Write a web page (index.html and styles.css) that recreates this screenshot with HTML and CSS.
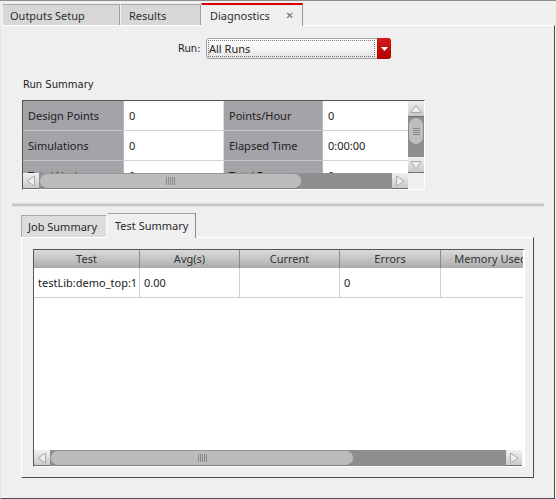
FILE: index.html
```html
<!DOCTYPE html>
<html>
<head>
<meta charset="utf-8">
<link rel="stylesheet" href="styles.css">
</head>
<body>
<div class="tabbar">
  <div class="tab t-outputs">Outputs Setup</div>
  <div class="tab t-results">Results</div>
  <div class="tab active t-diag"><span>Diagnostics</span><span class="close">✕</span></div>
</div>
<div class="main">
  <div class="runrow">
    <span class="runlabel">Run:</span>
    <div class="combo">
      <div class="combo-text">All Runs</div>
      <div class="combo-btn"><svg width="7" height="4" viewBox="0 0 7 4"><polygon points="0,0 7,0 3.5,4" fill="#fff"/></svg></div>
    </div>
  </div>
  <div class="section-label">Run Summary</div>
  <div class="sumbox">
    <div class="sum-top">
      <div class="sum-view">
        <div class="sum-grid">
          <div class="c lab">Design Points</div><div class="c val">0</div><div class="c lab">Points/Hour</div><div class="c val">0</div>
          <div class="c lab">Simulations</div><div class="c val">0</div><div class="c lab">Elapsed Time</div><div class="c val">0:00:00</div>
          <div class="c lab">Total Nodes</div><div class="c val">0</div><div class="c lab">Total Errors</div><div class="c val">0</div>
        </div>
      </div>
      <div class="vscroll">
        <div class="arrow"><svg width="16" height="16" viewBox="0 0 16 16"><polygon points="3,11.5 13,11.5 8,4" fill="#eeeeee" stroke="#a9a9a9"/></svg></div>
        <div class="vhandle"><div class="grip-v"></div></div>
        <div class="vtrack"></div>
        <div class="arrow"><svg width="16" height="16" viewBox="0 0 16 16"><polygon points="3,4.5 13,4.5 8,12" fill="#eeeeee" stroke="#a9a9a9"/></svg></div>
      </div>
    </div>
    <div class="sum-bottom">
      <div class="hscroll hs-small">
        <div class="arrow"><svg width="16" height="16" viewBox="0 0 16 16"><polygon points="11.5,3 11.5,13 4,8" fill="#eeeeee" stroke="#a9a9a9"/></svg></div>
        <div class="hhandle h-small"><div class="grip-h"></div></div>
        <div class="htrack"></div>
        <div class="arrow"><svg width="16" height="16" viewBox="0 0 16 16"><polygon points="4.5,3 4.5,13 12,8" fill="#eeeeee" stroke="#a9a9a9"/></svg></div>
      </div>
      <div class="corner"></div>
    </div>
  </div>
  <div class="splitter"></div>
  <div class="subtabs">
    <div class="subtab">Job Summary</div>
    <div class="subtab active">Test Summary</div>
  </div>
  <div class="subpanel">
    <div class="testtable">
      <div class="tview">
        <div class="thead">
          <div class="h">Test</div><div class="h">Avg(s)</div><div class="h">Current</div><div class="h">Errors</div><div class="h">Memory Used</div>
        </div>
        <div class="trow">
          <div class="d">testLib:demo_top:1</div><div class="d">0.00</div><div class="d"></div><div class="d">0</div><div class="d"></div>
        </div>
      </div>
      <div class="hscroll hs-big">
        <div class="arrow"><svg width="16" height="16" viewBox="0 0 16 16"><polygon points="11.5,3 11.5,13 4,8" fill="#eeeeee" stroke="#a9a9a9"/></svg></div>
        <div class="hhandle h-big"><div class="grip-h"></div></div>
        <div class="htrack"></div>
        <div class="arrow"><svg width="16" height="16" viewBox="0 0 16 16"><polygon points="4.5,3 4.5,13 12,8" fill="#eeeeee" stroke="#a9a9a9"/></svg></div>
      </div>
    </div>
  </div>
</div>
</body>
</html>
```
FILE: styles.css
```css
html, body {
  margin: 0;
  padding: 0;
}
body {
  width: 556px;
  height: 499px;
  overflow: hidden;
  background: #efefef;
  font-family: "Noto Sans", "DejaVu Sans", sans-serif;
  font-size: 11px;
  color: #2a2a2a;
}
.tabbar {
  height: 24px;
  border-top: 1px solid #8e8e8e;
  display: flex;
  align-items: flex-end;
  padding-left: 2px;
  position: relative;
  z-index: 2;
}
.tab {
  box-sizing: border-box;
  height: 21px;
  background: #d7d7d7;
  border-top: 1px solid #a8a8a8;
  border-left: 1px solid #f4f4f4;
  border-right: 1px solid #9c9c9c;
  padding-left: 7px;
  padding-top: 1px;
  display: flex;
  align-items: center;
  color: #2e2e2e;
}
.t-outputs { width: 118px; }
.t-results { width: 81px; padding-left: 8px; }
.t-diag { width: 102px; padding-left: 8px; }
.tab.active {
  height: 23px;
  margin-bottom: -1px;
  background: #efefef;
  border-top: 2px solid #d40000;
  padding-top: 0;
  padding-bottom: 1px;
  justify-content: space-between;
  padding-right: 8px;
}
.close {
  font-size: 10px;
  font-weight: bold;
  color: #666;
}
.main {
  box-sizing: border-box;
  height: 474px;
  width: 555px;
  border-top: 1px solid #ffffff;
  border-left: 1px solid #e4e4e4;
  border-right: 1px solid #4d4d4d;
  border-bottom: 1px solid #4d4d4d;
  position: relative;
  z-index: 1;
}
.runrow {
  margin-top: 12px;
  display: flex;
  align-items: center;
  padding-left: 177px;
}
.runlabel {
  font-family: "DejaVu Sans", sans-serif;
  font-size: 10px;
  color: #222;
  width: 28px;
}
.combo {
  box-sizing: border-box;
  width: 185px;
  height: 21px;
  border: 1px solid #a2a2a2;
  border-radius: 3px;
  background: linear-gradient(#ffffff, #f2f2f2 60%, #e2e2e2);
  display: flex;
  padding: 1px 0 1px 1px;
}
.combo-text {
  flex: 1;
  border: 1px dotted #7a7a7a;
  padding-left: 0;
  line-height: 15px;
  color: #1e1e1e;
}
.combo-btn {
  width: 14px;
  margin-top: -2px;
  margin-bottom: -2px;
  margin-right: -1px;
  background: linear-gradient(#d61a1a, #b30000);
  border-radius: 0 3px 3px 0;
  display: flex;
  align-items: center;
  justify-content: center;
  margin-left: 2px;
}
.section-label {
  margin-top: 19px;
  margin-left: 22px;
  height: 14px;
  line-height: 14px;
  font-family: "DejaVu Sans", sans-serif;
  font-size: 10px;
  color: #222;
}
.sumbox {
  margin-top: 8px;
  margin-left: 21px;
  width: 403px;
  box-sizing: border-box;
  border-top: 1px solid #555;
  border-left: 1px solid #555;
  border-right: 1px solid #fff;
  border-bottom: 1px solid #fff;
}
.sum-top {
  display: flex;
  height: 72px;
}
.sum-view {
  width: 385px;
  overflow: hidden;
  background: #fff;
}
.sum-grid {
  display: grid;
  grid-template-columns: 101px 100px 99px 100px;
  grid-auto-rows: 30px;
}
.c {
  box-sizing: border-box;
  border-bottom: 1px solid #d2d2d2;
  padding-left: 5px;
  display: flex;
  align-items: center;
  white-space: nowrap;
  color: #222;
}
.lab {
  background: #a3a3a8;
  border-right: 1px solid #b8b8bc;
  border-bottom-color: #c6c6ca;
}
.val {
  background: #fff;
  border-right: 1px solid #dcdcdc;
}
.vscroll {
  width: 16px;
  display: flex;
  flex-direction: column;
  background: #8e8e8e;
}
.arrow {
  width: 16px;
  height: 16px;
  flex: none;
  background: linear-gradient(#f0f0f0, #c9c9c9);
  box-sizing: border-box;
  border-bottom: 1px solid #6f6f6f;
}
.arrow svg { display: block; }
.vhandle {
  height: 28px;
  box-sizing: border-box;
  margin: 0;
  border-radius: 8px;
  background: #bebebe;
  border: 1px solid #8a8a8a;
  display: flex;
  align-items: center;
  justify-content: center;
}
.grip-v {
  width: 7px;
  height: 7px;
  background: repeating-linear-gradient(#8a8a8a 0 1px, transparent 1px 2px);
}
.vtrack {
  flex: 1;
  background: #8e8e8e;
}
.sum-bottom {
  display: flex;
  height: 16px;
}
.hscroll {
  display: flex;
  height: 16px;
  background: #8e8e8e;
}
.hs-small { width: 385px; }
.hs-big { width: 488px; }
.hscroll .arrow { border-bottom: 1px solid #6f6f6f; }
.hhandle {
  box-sizing: border-box;
  height: 16px;
  border-radius: 8px;
  background: #bcbcbc;
  border: 1px solid #959595;
  border-bottom-color: #7c7c7c;
  display: flex;
  align-items: center;
  justify-content: center;
}
.h-small { width: 263px; }
.h-big { width: 304px; }
.grip-h {
  width: 9px;
  height: 8px;
  background: repeating-linear-gradient(90deg, #8a8a8a 0 1px, transparent 1px 2px);
}
.htrack { flex: 1; }
.corner {
  width: 16px;
  background: #efefef;
}
.splitter {
  margin: 13px 10px 0 11px;
  height: 4px;
  box-sizing: border-box;
  border-top: 1px solid #dadada;
  background: #c6c6c6;
  border-bottom: 1px solid #e2e2e2;
}
.subtabs {
  margin-top: 6px;
  margin-left: 20px;
  height: 24px;
  display: flex;
  align-items: flex-end;
  position: relative;
  z-index: 2;
}
.subtab {
  box-sizing: border-box;
  height: 22px;
  width: 86px;
  background: #dcdcdc;
  border-top: 1px solid #a8a8a8;
  border-left: 1px solid #a8a8a8;
  border-right: 1px solid #f4f4f4;
  padding-left: 6px;
  display: flex;
  align-items: center;
  color: #2a2a2a;
}
.subtab.active {
  width: 89px;
  height: 25px;
  margin-bottom: -1px;
  background: #efefef;
  border-left: 1px solid #f8f8f8;
  border-right: 1px solid #8c8c8c;
  border-top: 1px solid #a0a0a0;
  padding-left: 7px;
  padding-bottom: 2px;
}
.subpanel {
  margin-left: 20px;
  width: 513px;
  height: 241px;
  box-sizing: border-box;
  border-top: 1px solid #ffffff;
  border-left: 1px solid #ffffff;
  border-right: 1px solid #4d4d4d;
  border-bottom: 1px solid #4d4d4d;
  padding: 11px 0 0 11px;
  position: relative;
  z-index: 1;
}
.testtable {
  width: 492px;
  height: 218px;
  box-sizing: border-box;
  border-top: 1px solid #555;
  border-left: 1px solid #555;
  border-right: 2px solid #fff;
  border-bottom: 1px solid #fff;
  display: flex;
  flex-direction: column;
  background: #fff;
}
.tview {
  flex: 1;
  overflow: hidden;
  background: #fff;
}
.thead, .trow {
  display: grid;
  grid-template-columns: 106px 100px 100px 101px 100px;
  width: 507px;
}
.thead {
  height: 18px;
  background: linear-gradient(#dadada, #c0c0c0 60%, #a9a9a9);
}
.h {
  box-sizing: border-box;
  border-right: 1px solid #8a8a8a;
  text-align: center;
  line-height: 18px;
  color: #333;
  white-space: nowrap;
}
.trow {
  height: 30px;
}
.d {
  box-sizing: border-box;
  border-right: 1px solid #cfcfcf;
  border-bottom: 1px solid #cfcfcf;
  padding-left: 4px;
  display: flex;
  align-items: center;
  white-space: nowrap;
  color: #222;
}
```
